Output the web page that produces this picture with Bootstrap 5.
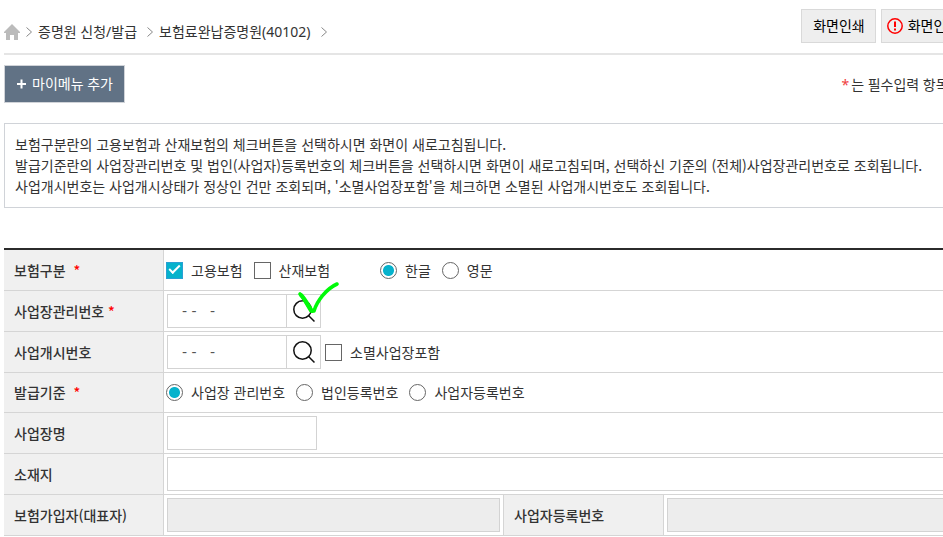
<!DOCTYPE html>
<html lang="ko">
<head>
<meta charset="utf-8">
<meta name="viewport" content="width=device-width, initial-scale=1">
<title>보험료완납증명원(40102)</title>
<link href="https://cdn.jsdelivr.net/npm/bootstrap@5.3.0/dist/css/bootstrap.min.css" rel="stylesheet">
<style>
  body { font: 14px/21px "Noto Sans", "Noto Sans CJK KR", sans-serif; color: #333; background: #fff; }
  .page-clip { overflow: hidden; }
  /* The form is wider than the window by a fixed margin. */
  .page-body { margin-left: 4px; margin-right: -54px; }
  .page-head { padding: 9px 0 10px; border-bottom: 2px solid #e5e5e5; }
  .crumbs { gap: 6px; line-height: 22px; }
  .crumbs a { color: #333; text-decoration: none; }
  .crumbs .step { gap: 6px; margin-right: 4px; }
  .tools { gap: 5px; }
  .tool-btn { --bs-btn-border-radius: 0; --bs-btn-padding-x: 11px; --bs-btn-padding-y: 5px; --bs-btn-font-size: 14px; --bs-btn-line-height: 22px;
    --bs-btn-color: #000; --bs-btn-bg: #eee; --bs-btn-border-color: #d9d9d9; --bs-btn-hover-bg: #e4e4e4; --bs-btn-hover-border-color: #ccc; }
  .tool-print { padding-right: 10px; }
  .tool-alert { gap: 5px; padding-left: 5px; }
  .menu-btn { --bs-btn-border-radius: 0; --bs-btn-padding-x: 11px; --bs-btn-padding-y: 7px; --bs-btn-font-size: 14px; --bs-btn-line-height: 22px;
    --bs-btn-color: #fff; --bs-btn-bg: #617285; --bs-btn-border-color: #d0d3d8; --bs-btn-hover-color: #fff; --bs-btn-hover-bg: #536476; gap: 5px; }
  .menu-row { padding: 10px 6px 20px 0; }
  .req { color: #f00; }
  .req-note { color: #f04040; margin-right: 2px; }
  .notice, .form-grid { font-family: "Noto Sans CJK KR", sans-serif; }
  .notice { border: 1px solid #d0d3d8; padding: 10px; margin-bottom: 40px; white-space: nowrap; }
  .form-grid { table-layout: fixed; border-collapse: separate; border-spacing: 0; border-top: 2px solid #2b2b2b; color: #333; }
  .form-grid > tbody > tr > * { height: 41px; padding: 3px; border: 0 solid #d5d5d5; border-bottom-width: 1px; color: #333; box-shadow: none; }
  .form-grid > tbody > .short-row > * { height: 40px; }
  .form-grid > tbody > tr > th { padding: 0 10px; background: #f0f0f0; border-right-width: 1px; font-weight: 500; white-space: nowrap; }
  .form-grid > tbody > tr > td + th { border-left-width: 1px; }
  .form-grid > tbody > tr > .choices { padding: 2px; }
  .col-head { width: 160px; }
  .col-mid { width: 339px; }
  .col-head2 { width: 161px; }
  .field { height: 34px; padding: 0 14px; border: 1px solid #d3d3d3; border-radius: 0; font-size: 14px; color: #555; }
  .field:disabled { background: #ededed; }
  .field-code { width: 120px; font-family: "DejaVu Sans", sans-serif; }
  .field-name { width: 150px; }
  .find-btn { width: 34px; height: 34px; border: 1px solid #d3d3d3; border-left: 0; border-radius: 0; background: #fff; --bs-btn-padding-x: 0; --bs-btn-padding-y: 0; }
  .find-btn svg { display: block; margin: auto; }
  .pick { gap: 8px; margin-right: 11px; }
  .pick-last { margin-right: 50px; }
  .pick .form-check-input { width: 17px; height: 17px; margin: 0; border: 1px solid #666; flex: none; }
  .pick .form-check-input[type=checkbox] { border-radius: 0; }
  .pick .form-check-input[type=checkbox]:checked { background: #06b2cc; border-color: #2aa0d4; position: relative; }
  .pick .form-check-input[type=checkbox]:checked::after { content: ""; position: absolute; left: 2px; top: 2px; width: 11px; height: 6px; border: solid #fff; border-width: 0 0 2px 2px; transform: rotate(-45deg); }
  .pick .form-check-input[type=radio]:checked { background: radial-gradient(circle, #06b2cc 5px, #fff 6px); }
  .marker { position: absolute; left: 130px; top: -14px; pointer-events: none; }
</style>
<script src="https://cdn.jsdelivr.net/npm/bootstrap@5.3.0/dist/js/bootstrap.bundle.min.js"></script>
</head>
<body>
<div class="page-clip">
<main class="page-body">
  <header class="page-head d-flex align-items-end justify-content-between">
    <nav class="crumbs d-flex align-items-center text-nowrap" aria-label="위치">
      <a href="#" aria-label="홈"><svg class="d-block" width="16" height="16" viewBox="0 0 16 16" fill="#bbb"><path d="M8 0L16 8V9H14V16H10V11H6V16H2V9H0V8Z"/></svg></a>
      <span class="step d-flex align-items-center"><svg width="6" height="10" viewBox="0 0 6 10" fill="none" stroke="#888"><path d="M.5.5L5.5 5L.5 9.5"/></svg><a href="#">증명원 신청/발급</a></span>
      <span class="step d-flex align-items-center"><svg width="6" height="10" viewBox="0 0 6 10" fill="none" stroke="#888"><path d="M.5.5L5.5 5L.5 9.5"/></svg><a href="#">보험료완납증명원(40102)</a></span>
      <svg width="6" height="10" viewBox="0 0 6 10" fill="none" stroke="#888"><path d="M.5.5L5.5 5L.5 9.5"/></svg>
    </nav>
    <div class="tools d-flex text-nowrap">
      <button type="button" class="btn tool-btn tool-print">화면인쇄</button>
      <button type="button" class="btn tool-btn tool-alert d-flex align-items-center"><svg width="16" height="16" viewBox="0 0 16 16" fill="none" stroke="#f00"><circle cx="8" cy="8" r="7.2" stroke-width="1.5"/><path d="M8 3.5V9M8 10.5V12.5" stroke-width="2"/></svg>화면인쇄안내</button>
    </div>
  </header>

  <div class="menu-row d-flex align-items-center justify-content-between">
    <button type="button" class="btn menu-btn d-flex align-items-center"><svg width="11" height="11" viewBox="0 0 11 11" stroke="#fff" stroke-width="2"><path d="M1 5H10M5.5 .5V9.5"/></svg>마이메뉴 추가</button>
    <span class="text-nowrap"><span class="req-note">*</span>는 필수입력 항목입니다.</span>
  </div>

  <div class="notice">보험구분란의 고용보험과 산재보험의 체크버튼을 선택하시면 화면이 새로고침됩니다.<br>발급기준란의 사업장관리번호 및 법인(사업자)등록번호의 체크버튼을 선택하시면 화면이 새로고침되며, 선택하신 기준의 (전체)사업장관리번호로 조회됩니다.<br>사업개시번호는 사업개시상태가 정상인 건만 조회되며, '소멸사업장포함'을 체크하면 소멸된 사업개시번호도 조회됩니다.</div>

  <form>
  <table class="table form-grid align-middle mb-0">
    <colgroup><col class="col-head"><col class="col-mid"><col class="col-head2"><col></colgroup>
    <tbody>
      <tr>
        <th scope="row">보험구분 &nbsp;<span class="req">*</span></th>
        <td colspan="3" class="choices"><div class="d-flex align-items-center">
          <span class="pick d-flex align-items-center"><input class="form-check-input" type="checkbox" id="emp" checked><label for="emp">고용보험</label></span>
          <span class="pick pick-last d-flex align-items-center"><input class="form-check-input" type="checkbox" id="acc"><label for="acc">산재보험</label></span>
          <span class="pick d-flex align-items-center"><input class="form-check-input" type="radio" name="lang" id="ko" checked><label for="ko">한글</label></span>
          <span class="pick d-flex align-items-center"><input class="form-check-input" type="radio" name="lang" id="en"><label for="en">영문</label></span>
        </div></td>
      </tr>
      <tr>
        <th scope="row"><label for="mgmt">사업장관리번호</label> <span class="req">*</span></th>
        <td colspan="3"><div class="d-flex position-relative">
          <input class="form-control field field-code" type="text" id="mgmt" value="- -   -">
          <button type="button" class="btn find-btn" aria-label="사업장관리번호 찾기"><svg width="24" height="24" viewBox="0 0 24 24" fill="none" stroke="#111" stroke-width="1.5"><circle cx="10.5" cy="10.5" r="8.7"/><path d="M16.5 16.5L22.5 22.5"/></svg></button>
          <svg class="marker" width="44" height="36" viewBox="0 0 44 36" fill="none" stroke="#00fa08" stroke-width="4" stroke-linecap="round" stroke-linejoin="round"><path d="M3 14C7 18 10 25 14 31L17 31C20 21 29 9 40 4" stroke-width="3.6"/><path d="M4 15C8 19 11 25 15 31"/></svg>
        </div></td>
      </tr>
      <tr>
        <th scope="row"><label for="open">사업개시번호</label></th>
        <td colspan="3"><div class="d-flex align-items-center">
          <input class="form-control field field-code" type="text" id="open" value="- -   -">
          <button type="button" class="btn find-btn me-1" aria-label="사업개시번호 찾기"><svg width="24" height="24" viewBox="0 0 24 24" fill="none" stroke="#111" stroke-width="1.5"><circle cx="10.5" cy="10.5" r="8.7"/><path d="M16.5 16.5L22.5 22.5"/></svg></button>
          <span class="pick d-flex align-items-center"><input class="form-check-input" type="checkbox" id="closed"><label for="closed">소멸사업장포함</label></span>
        </div></td>
      </tr>
      <tr class="short-row">
        <th scope="row">발급기준 &nbsp;<span class="req">*</span></th>
        <td colspan="3" class="choices"><div class="d-flex align-items-center">
          <span class="pick d-flex align-items-center"><input class="form-check-input" type="radio" name="basis" id="b1" checked><label for="b1">사업장 관리번호</label></span>
          <span class="pick d-flex align-items-center"><input class="form-check-input" type="radio" name="basis" id="b2"><label for="b2">법인등록번호</label></span>
          <span class="pick d-flex align-items-center"><input class="form-check-input" type="radio" name="basis" id="b3"><label for="b3">사업자등록번호</label></span>
        </div></td>
      </tr>
      <tr>
        <th scope="row"><label for="name">사업장명</label></th>
        <td colspan="3"><input class="form-control field field-name" type="text" id="name"></td>
      </tr>
      <tr>
        <th scope="row"><label for="addr">소재지</label></th>
        <td colspan="3"><input class="form-control field" type="text" id="addr"></td>
      </tr>
      <tr>
        <th scope="row"><label for="owner">보험가입자(대표자)</label></th>
        <td><input class="form-control field" type="text" id="owner" disabled></td>
        <th scope="row"><label for="biz">사업자등록번호</label></th>
        <td><input class="form-control field" type="text" id="biz" disabled></td>
      </tr>
    </tbody>
  </table>
  </form>
</main>
</div>
</body>
</html>
